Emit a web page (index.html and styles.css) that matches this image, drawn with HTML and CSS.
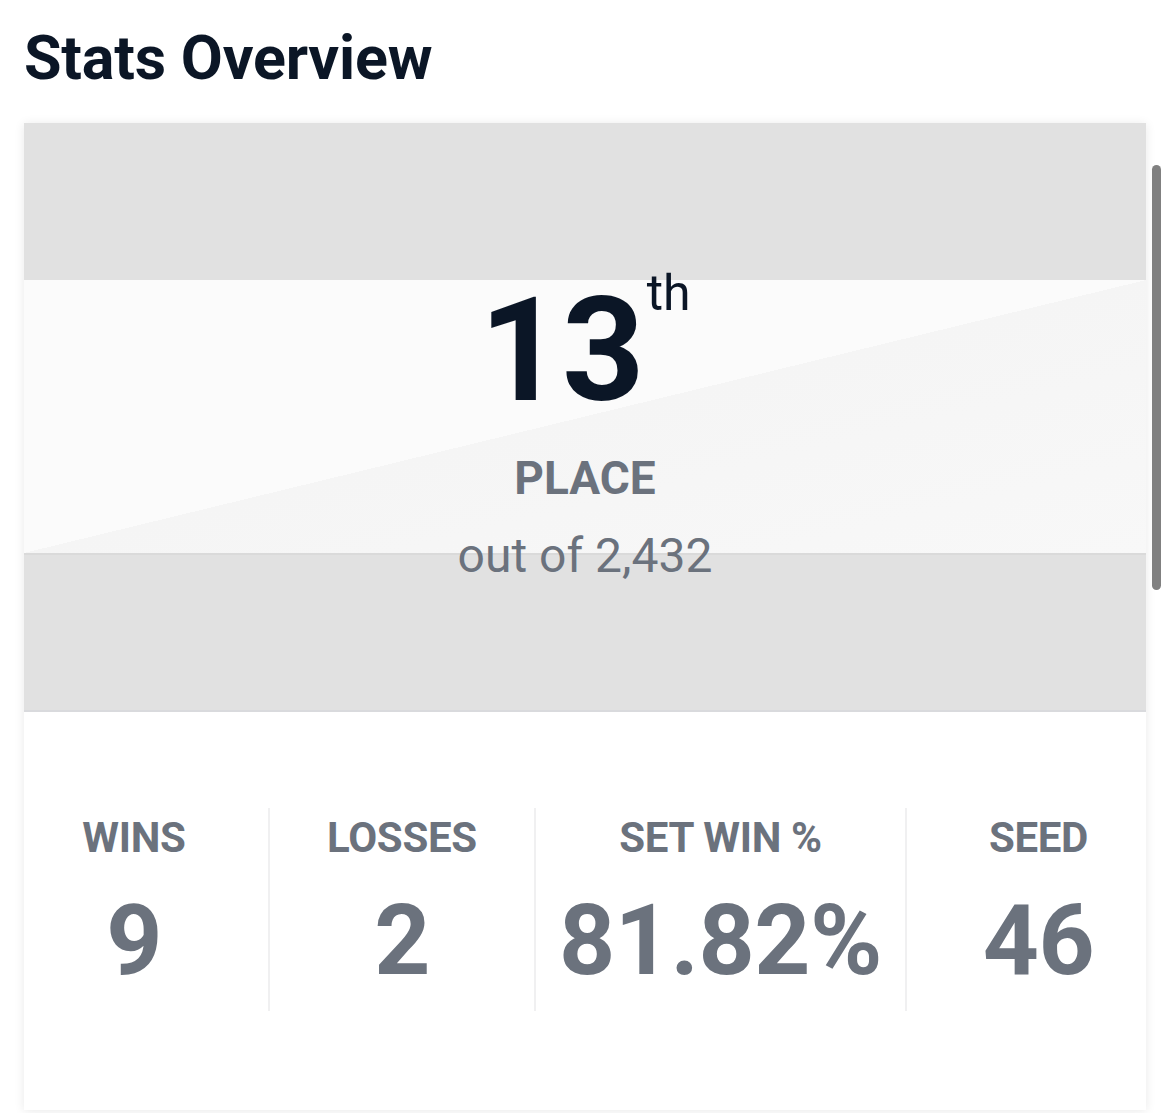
FILE: index.html
```html
<!DOCTYPE html>
<html lang="en">

<head>
    <meta charset="UTF-8">
    <meta name="viewport" content="width=device-width, initial-scale=1.0">
    <title>Stats Overview</title>
    <link rel="stylesheet" href="styles.css">
</head>

<body>
    <h2 class="section-title">Stats Overview</h2>

    <div class="stats-card">
        <div class="placement">
            <div class="rank">13<span class="rank-suffix">th</span></div>
            <div class="rank-label">PLACE</div>
            <div class="rank-total">out of 2,432</div>
        </div>

        <div class="stats-row">
            <div class="stat">
                <div class="stat-label">WINS</div>
                <div class="stat-value">9</div>
            </div>
            <div class="stat">
                <div class="stat-label">LOSSES</div>
                <div class="stat-value">2</div>
            </div>
            <div class="stat">
                <div class="stat-label">SET WIN %</div>
                <div class="stat-value">81.82%</div>
            </div>
            <div class="stat">
                <div class="stat-label">SEED</div>
                <div class="stat-value">46</div>
            </div>
        </div>
    </div>

    <!-- overlay scrollbar -->
    <div class="scroll-thumb"></div>
</body>

</html>
```

FILE: styles.css
```css
* {
    margin: 0;
    padding: 0;
    box-sizing: border-box;
}

body {
    font-family: Roboto, 'Liberation Sans', sans-serif;
    background: #fff;
    padding: 0 24px;
    position: relative;
    min-height: 100vh;
    overflow: hidden;
}

.section-title {
    font-size: 61px;
    line-height: 1;
    font-weight: 700;
    color: #0b1626;
    letter-spacing: -0.2px;
    margin-top: 28px;
    margin-bottom: 34px;
}

.stats-card {
    background: #fff;
    box-shadow: 0 1px 10px rgba(0, 0, 0, 0.09);
    overflow: hidden;
    height: 987px;
}

.placement {
    height: 589px;
    padding-top: 156px;
    text-align: center;
    border-bottom: 2px solid #d9dadd;
    background:
        linear-gradient(#dadada, #dadada) 0 430px / 100% 2px no-repeat,
        linear-gradient(to bottom right, #fbfbfb 50%, #f5f5f5 50%, #f8f8f8 100%) 0 157px / 100% 273px no-repeat,
        #e1e1e1;
}

.rank {
    font-size: 144px;
    line-height: 1;
    font-weight: 700;
    color: #0b1626;
}

.rank-suffix {
    font-size: 50px;
    font-weight: 400;
    line-height: 0;
    vertical-align: 90px;
    margin-left: 2px;
}

.rank-label {
    font-size: 46px;
    line-height: 1;
    font-weight: 700;
    color: #6b727d;
    margin-top: 32px;
}

.rank-total {
    font-size: 48px;
    line-height: 1;
    color: #6b727d;
    margin-top: 31px;
}

.stats-row {
    display: grid;
    grid-template-columns: 268px 266px 371px 265px;
    margin: 0 -24px;
    padding: 96px 0 97px;
}

.stat {
    text-align: center;
    padding: 9px 0 21px;
    color: #6b727d;
    font-weight: 700;
}

.stat + .stat {
    border-left: 2px solid #f0f0f1;
}

.stat-label {
    font-size: 42px;
    line-height: 1;
    letter-spacing: -0.3px;
}

.stat-value {
    font-size: 98px;
    line-height: 1;
    margin-top: 33px;
    letter-spacing: -0.5px;
}

.scroll-thumb {
    position: absolute;
    top: 165px;
    right: 9px;
    width: 9px;
    height: 425px;
    border-radius: 5px;
    background: #808080;
}
```
